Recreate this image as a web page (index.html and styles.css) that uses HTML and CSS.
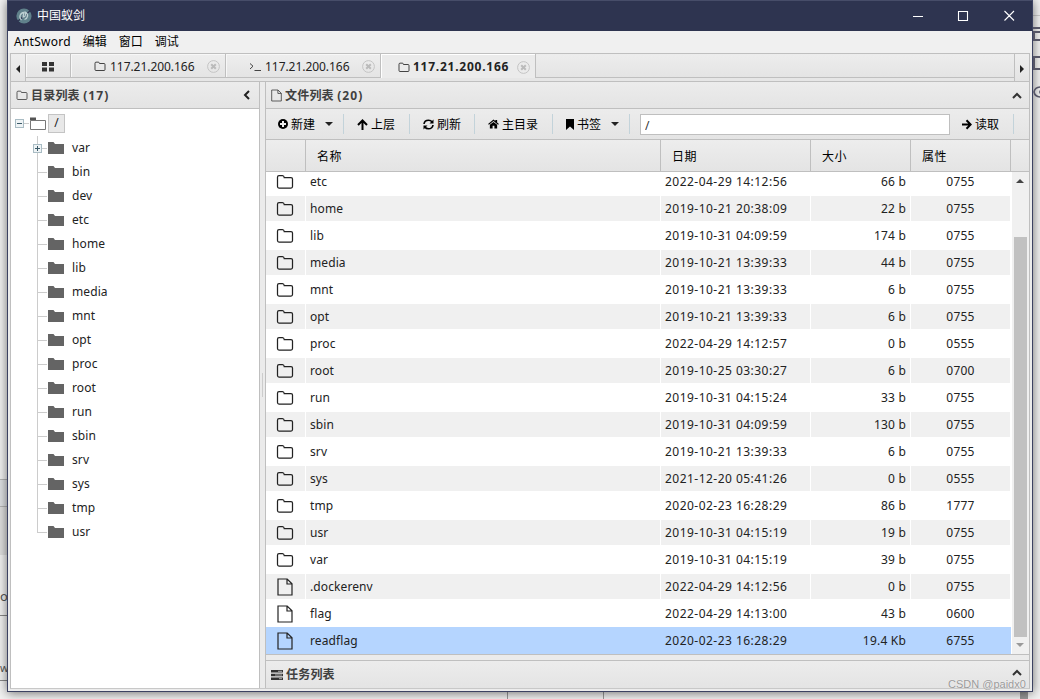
FILE: index.html
```html
<!DOCTYPE html>
<html lang="zh-CN">
<head>
    <meta charset="UTF-8">
    <title>中国蚁剑</title>
    <link rel="stylesheet" href="styles.css">
</head>
<body>
    <svg class="hide">
        <symbol id="folder-o" viewBox="0 0 18 16"><path d="M1.5 3.2Q1.5 1.5 3 1.5H6.5Q8 1.5 8.2 3.5H15Q16.5 3.5 16.5 5V12.5Q16.5 14 15 14H3Q1.5 14 1.5 12.5Z" fill="none" stroke="currentColor" stroke-width="1.25"/></symbol>
        <symbol id="file-o" viewBox="0 0 16 18"><path d="M1 1H10.2L15 5.8V17H1ZM10 1V6H15" fill="none" stroke="currentColor" stroke-width="1.2"/></symbol>
        <symbol id="close" viewBox="0 0 13 13"><circle cx="6.5" cy="6.5" r="5.9" fill="none" stroke="#c4c4c4"/><path d="M4.2 4.2L8.8 8.8M8.8 4.2L4.2 8.8" stroke="#bbb" stroke-width="2"/></symbol>
        <symbol id="up" viewBox="0 0 10 7"><path d="M1 6L5 2L9 6" fill="none" stroke="#333" stroke-width="2"/></symbol>
    </svg>
    <div class="back">
        <div class="back__line back__line--1"></div>
        <div class="back__band"></div>
        <div class="back__low"></div>
        <span class="back__text back__text--1">o</span>
        <span class="back__text back__text--2">w</span>
        <div class="back__line back__line--2"></div>
        <div class="back__line back__line--3"></div>
        <div class="back__bottom"></div>
        <div class="back__thumb"></div>
        <svg class="back__icons" width="7" height="80" viewBox="0 0 7 80"><path d="M0 1H8M8 5H1V13H8M8 30H1V42H8" fill="none" stroke="#555566" stroke-width="2"/><path d="M8 60Q2 60 1 65Q2 70 8 70M8 63Q6 65 8 67" fill="none" stroke="#555566" stroke-width="1.6"/></svg>
    </div>
    <div class="win">
        <div class="title">
            <svg class="title__logo" width="16" height="16" viewBox="0 0 16 16"><circle cx="8" cy="8" r="7.6" fill="#60818b"/><path d="M1 14L15 2" stroke="#2e3450" stroke-width="1.4"/><path d="M5.5 12C2.5 9.5 4 5 8 4.5L7 9C9 9 10 7 9.5 4.2C12.8 6 12 10.5 8.5 11.5" fill="none" stroke="#bdd0d2" stroke-width="1.3"/></svg>
            <span class="title__text">中国蚁剑</span>
            <svg class="title__btns" width="104" height="12" viewBox="0 0 104 12"><path d="M0 6.5H10M45.5 1.5H54.5V10.5H45.5ZM91.5 1L101 10.5M101 1L91.5 10.5" fill="none" stroke="#fff" stroke-width="1.1"/></svg>
        </div>
        <div class="menu"><span class="menu__app">AntSword</span><span>编辑</span><span>窗口</span><span>调试</span></div>
        <div class="tabs">
            <div class="tabs__arrow"><i class="tri tri--left"></i></div>
            <div class="tabs__list">
                <div class="tab tab--home"><svg width="12" height="10" viewBox="0 0 12 10"><path d="M0 0H5V4H0ZM7 0H12V4H7ZM0 5.5H5V9.5H0ZM7 5.5H12V9.5H7Z" fill="#333"/></svg></div>
                <div class="tab"><svg class="tab__icon" width="12" height="11"><use href="#folder-o"/></svg><span class="tab__text">117.21.200.166</span><svg class="tab__close" width="13" height="13"><use href="#close"/></svg></div>
                <div class="tab"><svg class="tab__icon" width="12" height="11" viewBox="0 0 12 11"><path d="M1 2.5L4 5.2L1 8M5.5 9.5H12" fill="none" stroke="#444"/></svg><span class="tab__text">117.21.200.166</span><svg class="tab__close" width="13" height="13"><use href="#close"/></svg></div>
                <div class="tab tab--active"><svg class="tab__icon" width="12" height="11"><use href="#folder-o"/></svg><span class="tab__text">117.21.200.166</span><svg class="tab__close" width="13" height="13"><use href="#close"/></svg></div>
                <div class="tabs__rest"></div>
            </div>
            <div class="tabs__arrow tabs__arrow--right"><i class="tri tri--right"></i></div>
        </div>
        <div class="main">
            <div class="side">
                <div class="head"><svg width="12" height="11"><use href="#folder-o"/></svg><span class="head__text head__text--side">目录列表 <span class="head__num">(17)</span></span><svg class="head__toggle head__toggle--side" width="7" height="10" viewBox="0 0 7 10"><path d="M6 1L2 5L6 9" fill="none" stroke="#222" stroke-width="2"/></svg></div>
                <div class="tree" id="tree">
                    <div class="tree__root"><i class="box"></i><i class="dash"></i><svg width="16" height="13" viewBox="0 0 16 13"><path d="M0 3.5V.5H6V3" fill="#555"/><path d="M.5 3.5H15.5V12.5H.5Z" fill="#fff" stroke="#777"/></svg><span class="tree__sel">/</span></div>
                </div>
            </div>
            <div class="split"></div>
            <div class="right">
                <div class="files">
                    <div class="head"><svg width="11" height="13"><use href="#file-o"/></svg><span class="head__text">文件列表 <span class="head__num">(20)</span></span><svg class="head__toggle" width="10" height="7"><use href="#up"/></svg></div>
                    <div class="tools">
                        <div class="tool tool--new"><svg width="10" height="10" viewBox="0 0 10 10"><circle cx="5" cy="5" r="5"/><path d="M5 2V8M2 5H8" stroke="#eee" stroke-width="2"/></svg><span>新建</span><i class="tri tri--down"></i></div>
                        <div class="tool tool--up"><svg width="11" height="11" viewBox="0 0 11 11"><path d="M5.5 11V2M1 6L5.5 1.5L10 6" fill="none" stroke="#000" stroke-width="2"/></svg><span>上层</span></div>
                        <div class="tool tool--refresh"><svg width="11" height="11" viewBox="0 0 11 11"><path d="M1 5Q1.5 1.2 5.5 1.2Q8 1.2 9 3M10 6Q9.5 9.8 5.5 9.8Q3 9.8 2 8" fill="none" stroke="#000" stroke-width="1.6"/><path d="M10.5 .5V4.5H6.5ZM.5 10.5V6.5H4.5Z"/></svg><span>刷新</span></div>
                        <div class="tool tool--home"><svg width="11" height="10" viewBox="0 0 12 11"><path d="M0 5.5L6 .5L8 2.2V1H10V3.8L12 5.5L11 6.3L6 2.3L1 6.3Z"/><path d="M2 6.4L6 3.3L10 6.4V10.5H7V7.3H5V10.5H2Z"/></svg><span>主目录</span></div>
                        <div class="tool tool--mark"><svg width="8" height="11" viewBox="0 0 8 11"><path d="M0 0H8V11L4 7.5L0 11Z"/></svg><span>书签</span><i class="tri tri--down"></i></div>
                        <input class="tools__path" type="text" value="/">
                        <div class="tool tool--read"><svg width="10" height="11" viewBox="0 0 10 11"><path d="M0 5.5H8.5M4.5 1.3L8.7 5.5L4.5 9.7" fill="none" stroke="#000" stroke-width="2"/></svg><span>读取</span></div>
                    </div>
                    <div class="grid grid--head"><div></div><div>名称</div><div>日期</div><div>大小</div><div>属性</div></div>
                    <div class="list">
                        <div class="list__rows" id="rows"></div>
                        <div class="bar"><i class="tri tri--up"></i><div class="bar__thumb"></div><i class="tri tri--down tri--grey"></i></div>
                    </div>
                </div>
                <div class="tasks"><svg width="12" height="10" viewBox="0 0 12 10"><path d="M0 0H12V2.6H0ZM0 3.7H12V6.3H0ZM0 7.4H12V10H0Z" fill="#333"/><path d="M7 1.3H11M4 5H11M8 8.7H11" stroke="#aaa"/></svg><span class="head__text">任务列表</span><svg class="head__toggle" width="10" height="7"><use href="#up"/></svg></div>
            </div>
        </div>
    </div>
    <span class="mark">CSDN @paidx0</span>
    <script>
        var dirs = ['var', 'bin', 'dev', 'etc', 'home', 'lib', 'media', 'mnt', 'opt', 'proc', 'root', 'run', 'sbin', 'srv', 'sys', 'tmp', 'usr'];
        var files = [
            ['etc', '2022-04-29 14:12:56', '66 b', '0755'],
            ['home', '2019-10-21 20:38:09', '22 b', '0755'],
            ['lib', '2019-10-31 04:09:59', '174 b', '0755'],
            ['media', '2019-10-21 13:39:33', '44 b', '0755'],
            ['mnt', '2019-10-21 13:39:33', '6 b', '0755'],
            ['opt', '2019-10-21 13:39:33', '6 b', '0755'],
            ['proc', '2022-04-29 14:12:57', '0 b', '0555'],
            ['root', '2019-10-25 03:30:27', '6 b', '0700'],
            ['run', '2019-10-31 04:15:24', '33 b', '0755'],
            ['sbin', '2019-10-31 04:09:59', '130 b', '0755'],
            ['srv', '2019-10-21 13:39:33', '6 b', '0755'],
            ['sys', '2021-12-20 05:41:26', '0 b', '0555'],
            ['tmp', '2020-02-23 16:28:29', '86 b', '1777'],
            ['usr', '2019-10-31 04:15:19', '19 b', '0755'],
            ['var', '2019-10-31 04:15:19', '39 b', '0755'],
            ['.dockerenv', '2022-04-29 14:12:56', '0 b', '0755'],
            ['flag', '2022-04-29 14:13:00', '43 b', '0600'],
            ['readflag', '2020-02-23 16:28:29', '19.4 Kb', '6755']
        ];

        var html = '';
        for (var i = 0; i < dirs.length; i++) {
            html += '<div class="node"><div class="node__line"></div>' + (i == 0 ? '<i class="box box--plus"></i>' : '') +
                '<svg width="16" height="12" viewBox="0 0 16 12"><path d="M0 0H5.5L7 2H16V12H0Z" fill="#646464"/></svg>' +
                '<span>' + dirs[i] + '</span></div>';
        }
        document.getElementById('tree').innerHTML += html;

        html = '';
        for (var i = 0; i < files.length; i++) {
            var f = files[i];
            var icon = i < 15 ? '<svg width="18" height="16"><use href="#folder-o"/></svg>' : '<svg width="16" height="18"><use href="#file-o"/></svg>';
            html += '<div class="grid grid--row"><div class="c-icon">' + icon + '</div><div>' + f[0] + '</div><div class="c-date">' + f[1] +
                '</div><div class="c-size">' + f[2] + '</div><div class="c-mode">' + f[3] + '</div></div>';
        }
        document.getElementById('rows').innerHTML = html;
    </script>
</body>
</html>
```

FILE: styles.css
```css
*{
    box-sizing: border-box;
}
body{
    margin: 0;
    height: 699px;
    overflow: hidden;
    background: #f2f2f2;
    color: #222;
    font: 12px/16px "Noto Sans", "Noto Sans CJK SC", sans-serif;
}
svg{
    display: block;
    flex: none;
}
.hide{
    display: none;
}

/* what shows behind the window */
.back div, .back span, .back__icons{
    position: absolute;
}
.back__line{
    left: 0;
    width: 7px;
    height: 1px;
    background: #888;
}
.back__line--1{
    top: 15px;
    left: 1033px;
    background: #ccc;
}
.back__line--2{
    top: 615px;
}
.back__line--3{
    top: 680px;
}
.back__band{
    top: 479px;
    width: 8px;
    height: 28px;
    background: #dfe1e4;
    border: solid #b5b5b5;
    border-width: 1px 0;
}
.back__low{
    top: 507px;
    width: 8px;
    height: 48px;
    background: #e0e0e0;
}
.back__text{
    left: 0;
    font-size: 13px;
    letter-spacing: -1px;
    color: #555;
}
.back__text--1{
    top: 588px;
}
.back__text--2{
    top: 660px;
    font-size: 11px;
}
.back__bottom{
    left: 507px;
    top: 690px;
    width: 97px;
    height: 9px;
    border: solid #999;
    border-width: 0 1px;
}
.back__thumb{
    left: 1020px;
    top: 690px;
    width: 8px;
    height: 9px;
    background: #999;
}
.back__icons{
    left: 1033px;
    top: 27px;
    z-index: 1;
}

.win{
    position: relative;
    display: flex;
    flex-direction: column;
    width: 1026px;
    height: 692px;
    margin-left: 7px;
    background: #ececec;
    border: 1px solid #3c4262;
    border-top-color: #474d69;
    box-shadow: 0 1px 10px rgba(0, 0, 0, .55);
}
.title{
    display: flex;
    align-items: center;
    height: 30px;
    padding: 0 15px 0 8px;
    background: #2e3450;
    color: #fff;
}
.title__text{
    margin-left: 5px;
}
.title__btns{
    margin-left: auto;
}
.menu{
    display: flex;
    gap: 12px;
    height: 22px;
    padding: 3px 6px 0;
    background: #f0f0f0;
    color: #000;
}
.menu__app{
    letter-spacing: .25px;
}

.tabs{
    display: flex;
    height: 28px;
    margin: 0 2px;
    border: solid #bfbfbf;
    border-width: 1px 1px 0;
    background: #e6e6e6;
}
.tabs__arrow{
    display: flex;
    align-items: center;
    justify-content: center;
    width: 15px;
    padding-top: 2px;
    border-right: 1px solid #bfbfbf;
    background: linear-gradient(#eee, #e4e4e4);
}
.tabs__arrow--right{
    border-right: 0;
    border-left: 1px solid #bfbfbf;
}
.tabs__list{
    display: flex;
    flex: 1;
    height: 24px;
}
.tab{
    display: flex;
    align-items: center;
    width: 155px;
    height: 24px;
    padding: 2px 0 0 23px;
    border: solid #bfbfbf;
    border-width: 0 1px 1px 0;
    background: linear-gradient(#eee, #e4e4e4);
    box-shadow: inset 1px 1px #f7f7f7;
}
.tab--home{
    width: 45px;
    padding-left: 16px;
}
.tab--active{
    padding-left: 17px;
    border-bottom: 0;
    background: #ebebeb;
    font-weight: bold;
    box-shadow: inset 1px 1px #fff;
}
.tab__text{
    margin-left: 4px;
    letter-spacing: -.05px;
}
.tab--active .tab__text{
    margin-left: 3px;
    letter-spacing: .75px;
}
.tab__close{
    margin-left: auto;
    margin-right: 5px;
}
.tabs__rest{
    flex: 1;
    border-bottom: 1px solid #bfbfbf;
    background: linear-gradient(#ededed, #e4e4e4);
}

.tri{
    border: 4px solid transparent;
}
.tri--left{
    border-width: 4px 4px 4px 0;
    border-right-color: #222;
}
.tri--right{
    border-width: 4px 0 4px 4px;
    border-left-color: #222;
}
.tri--down{
    border-width: 4px 4px 0;
    border-top-color: #222;
}
.tri--up{
    border-width: 0 4px 4px;
    border-bottom-color: #444;
}
.tri--grey{
    border-top-color: #999;
}

.main{
    display: flex;
    width: 1020px;
    height: 608px;
    margin-left: 2px;
    border: 1px solid #bfbfbf;
    border-bottom-color: #c8c8c8;
}
.head{
    display: flex;
    align-items: center;
    height: 27px;
    padding-left: 5px;
    border-bottom: 1px solid #bfbfbf;
    background: linear-gradient(#ececec, #e4e4e4);
    color: #404040;
}
.head__text{
    margin-left: 3px;
    padding-top: 1px;
    font-weight: bold;
    letter-spacing: .2px;
}
.head__num{
    letter-spacing: 1.1px;
}
.head__toggle{
    margin-left: auto;
    margin-right: 7px;
}
.head__toggle--side{
    margin-right: 9px;
}
.side{
    width: 249px;
    border-right: 1px solid #bfbfbf;
    background: #fff;
}
.split{
    width: 5px;
    background: linear-gradient(90deg, transparent 2px, #ccc 2px, #ccc 3px, transparent 3px) 0 291px / 5px 24px no-repeat #ebebeb;
}
.tree__root{
    display: flex;
    align-items: center;
    height: 26px;
    margin-top: 1px;
    padding-left: 4px;
}
.tree__sel{
    width: 17px;
    height: 19px;
    margin-left: 2px;
    border: 1px solid #c4c4c4;
    background: #e8e8e8;
    text-align: center;
}
.box{
    width: 9px;
    height: 9px;
    border: 1px solid #a9bcc4;
    background: linear-gradient(#3b5a68, #3b5a68) center / 5px 1px no-repeat #eef3f5;
}
.box--plus{
    margin-right: 6px;
    background: linear-gradient(#3b5a68, #3b5a68) center / 5px 1px no-repeat, linear-gradient(#3b5a68, #3b5a68) center / 1px 5px no-repeat, #eef3f5;
}
.dash{
    width: 5px;
    height: 1px;
    margin-right: 1px;
    background: #ccc;
}
.node{
    display: flex;
    align-items: center;
    height: 24px;
    padding-left: 26px;
}
.node__line{
    width: 10px;
    height: 24px;
    margin-right: 1px;
    border-left: 1px solid #ccc;
    background: linear-gradient(#ccc, #ccc) 0 12px / 10px 1px no-repeat;
}
.node:last-child .node__line{
    height: 13px;
    margin-bottom: 11px;
}
.node .box--plus{
    margin-left: -15px;
}
.node span{
    margin-left: 8px;
    letter-spacing: .1px;
}

.right{
    display: flex;
    flex: 1;
    flex-direction: column;
    justify-content: space-between;
    background: #ebebeb;
    border-left: 1px solid #bfbfbf;
}
.files{
    height: 573px;
    border-bottom: 1px solid #bfbfbf;
}
.tools{
    display: flex;
    align-items: center;
    height: 31px;
    border-bottom: 1px solid #bfbfbf;
    background: linear-gradient(#ececec, #e4e4e4);
    color: #000;
}
.tool{
    display: flex;
    align-items: center;
    height: 20px;
    border-right: 1px solid #c3d3da;
}
.tool span{
    margin-left: 3px;
    padding-top: 2px;
}
.tool .tri{
    margin-left: 10px;
}
.tool--new{
    width: 78px;
    padding-left: 12px;
}
.tool--up{
    width: 66px;
    padding-left: 13px;
}
.tool--refresh{
    width: 65px;
    padding-left: 13px;
}
.tool--home{
    width: 78px;
    padding-left: 13px;
}
.tool--mark{
    width: 77px;
    padding-left: 13px;
}
.tool--read{
    width: 64px;
    padding-left: 12px;
}
.tools__path{
    width: 310px;
    height: 21px;
    margin-left: 10px;
    padding: 2px 4px 0;
    border: 1px solid #bfbfbf;
    background: #fff;
    color: #333;
    font: inherit;
}
.grid{
    display: grid;
    grid-template-columns: 40px 355px 150px 100px 100px;
}
.grid--head{
    height: 32px;
    border-bottom: 1px solid #bfbfbf;
    background: linear-gradient(#ededed, #e4e4e4);
    color: #000;
    line-height: 34px;
    letter-spacing: .5px;
}
.grid--head div{
    height: 31px;
    padding-left: 11px;
    border-right: 1px solid #bfbfbf;
}
.list{
    display: flex;
    height: 482px;
    overflow: hidden;
    background: #fff;
}
.list__rows{
    width: 745px;
    margin-top: -4px;
}
.grid--row{
    height: 27px;
    padding: 1px 0;
    line-height: 26px;
}
.grid--row div{
    height: 25px;
    padding-left: 4px;
    border-right: 1px solid #fff;
    letter-spacing: .1px;
}
.grid--row:nth-child(even) div{
    background: #f0f0f0;
}
.grid--row:last-child, .grid--row:last-child div{
    background: #b5d5ff;
    border-color: #b5d5ff;
}
.grid--row .c-icon{
    display: flex;
    align-items: center;
    justify-content: center;
    padding: 0 1px 0 0;
}
.grid--row .c-date{
    letter-spacing: .47px;
}
.grid--row .c-size{
    padding-right: 4px;
    text-align: right;
    letter-spacing: .2px;
}
.grid--row .c-mode{
    padding: 0;
    text-align: center;
    letter-spacing: .2px;
}
.bar{
    display: flex;
    flex: 1;
    flex-direction: column;
    align-items: center;
    margin-left: 1px;
    padding: 7px 1px 7px 0;
    background: #f0f0f0;
}
.bar__thumb{
    width: 13px;
    height: 400px;
    margin: 54px 0 6px;
    background: #c1c1c1;
}
.tasks{
    display: flex;
    align-items: center;
    height: 28px;
    padding-left: 5px;
    border-top: 1px solid #bfbfbf;
    background: linear-gradient(#ececec, #e4e4e4);
    color: #404040;
}
.tasks .head__toggle{
    margin-bottom: 5px;
}
.mark{
    position: absolute;
    left: 948px;
    top: 676px;
    color: #999;
    font: 11px/16px "Liberation Sans", sans-serif;
    text-shadow: 0 0 1px #fff;
}
```
